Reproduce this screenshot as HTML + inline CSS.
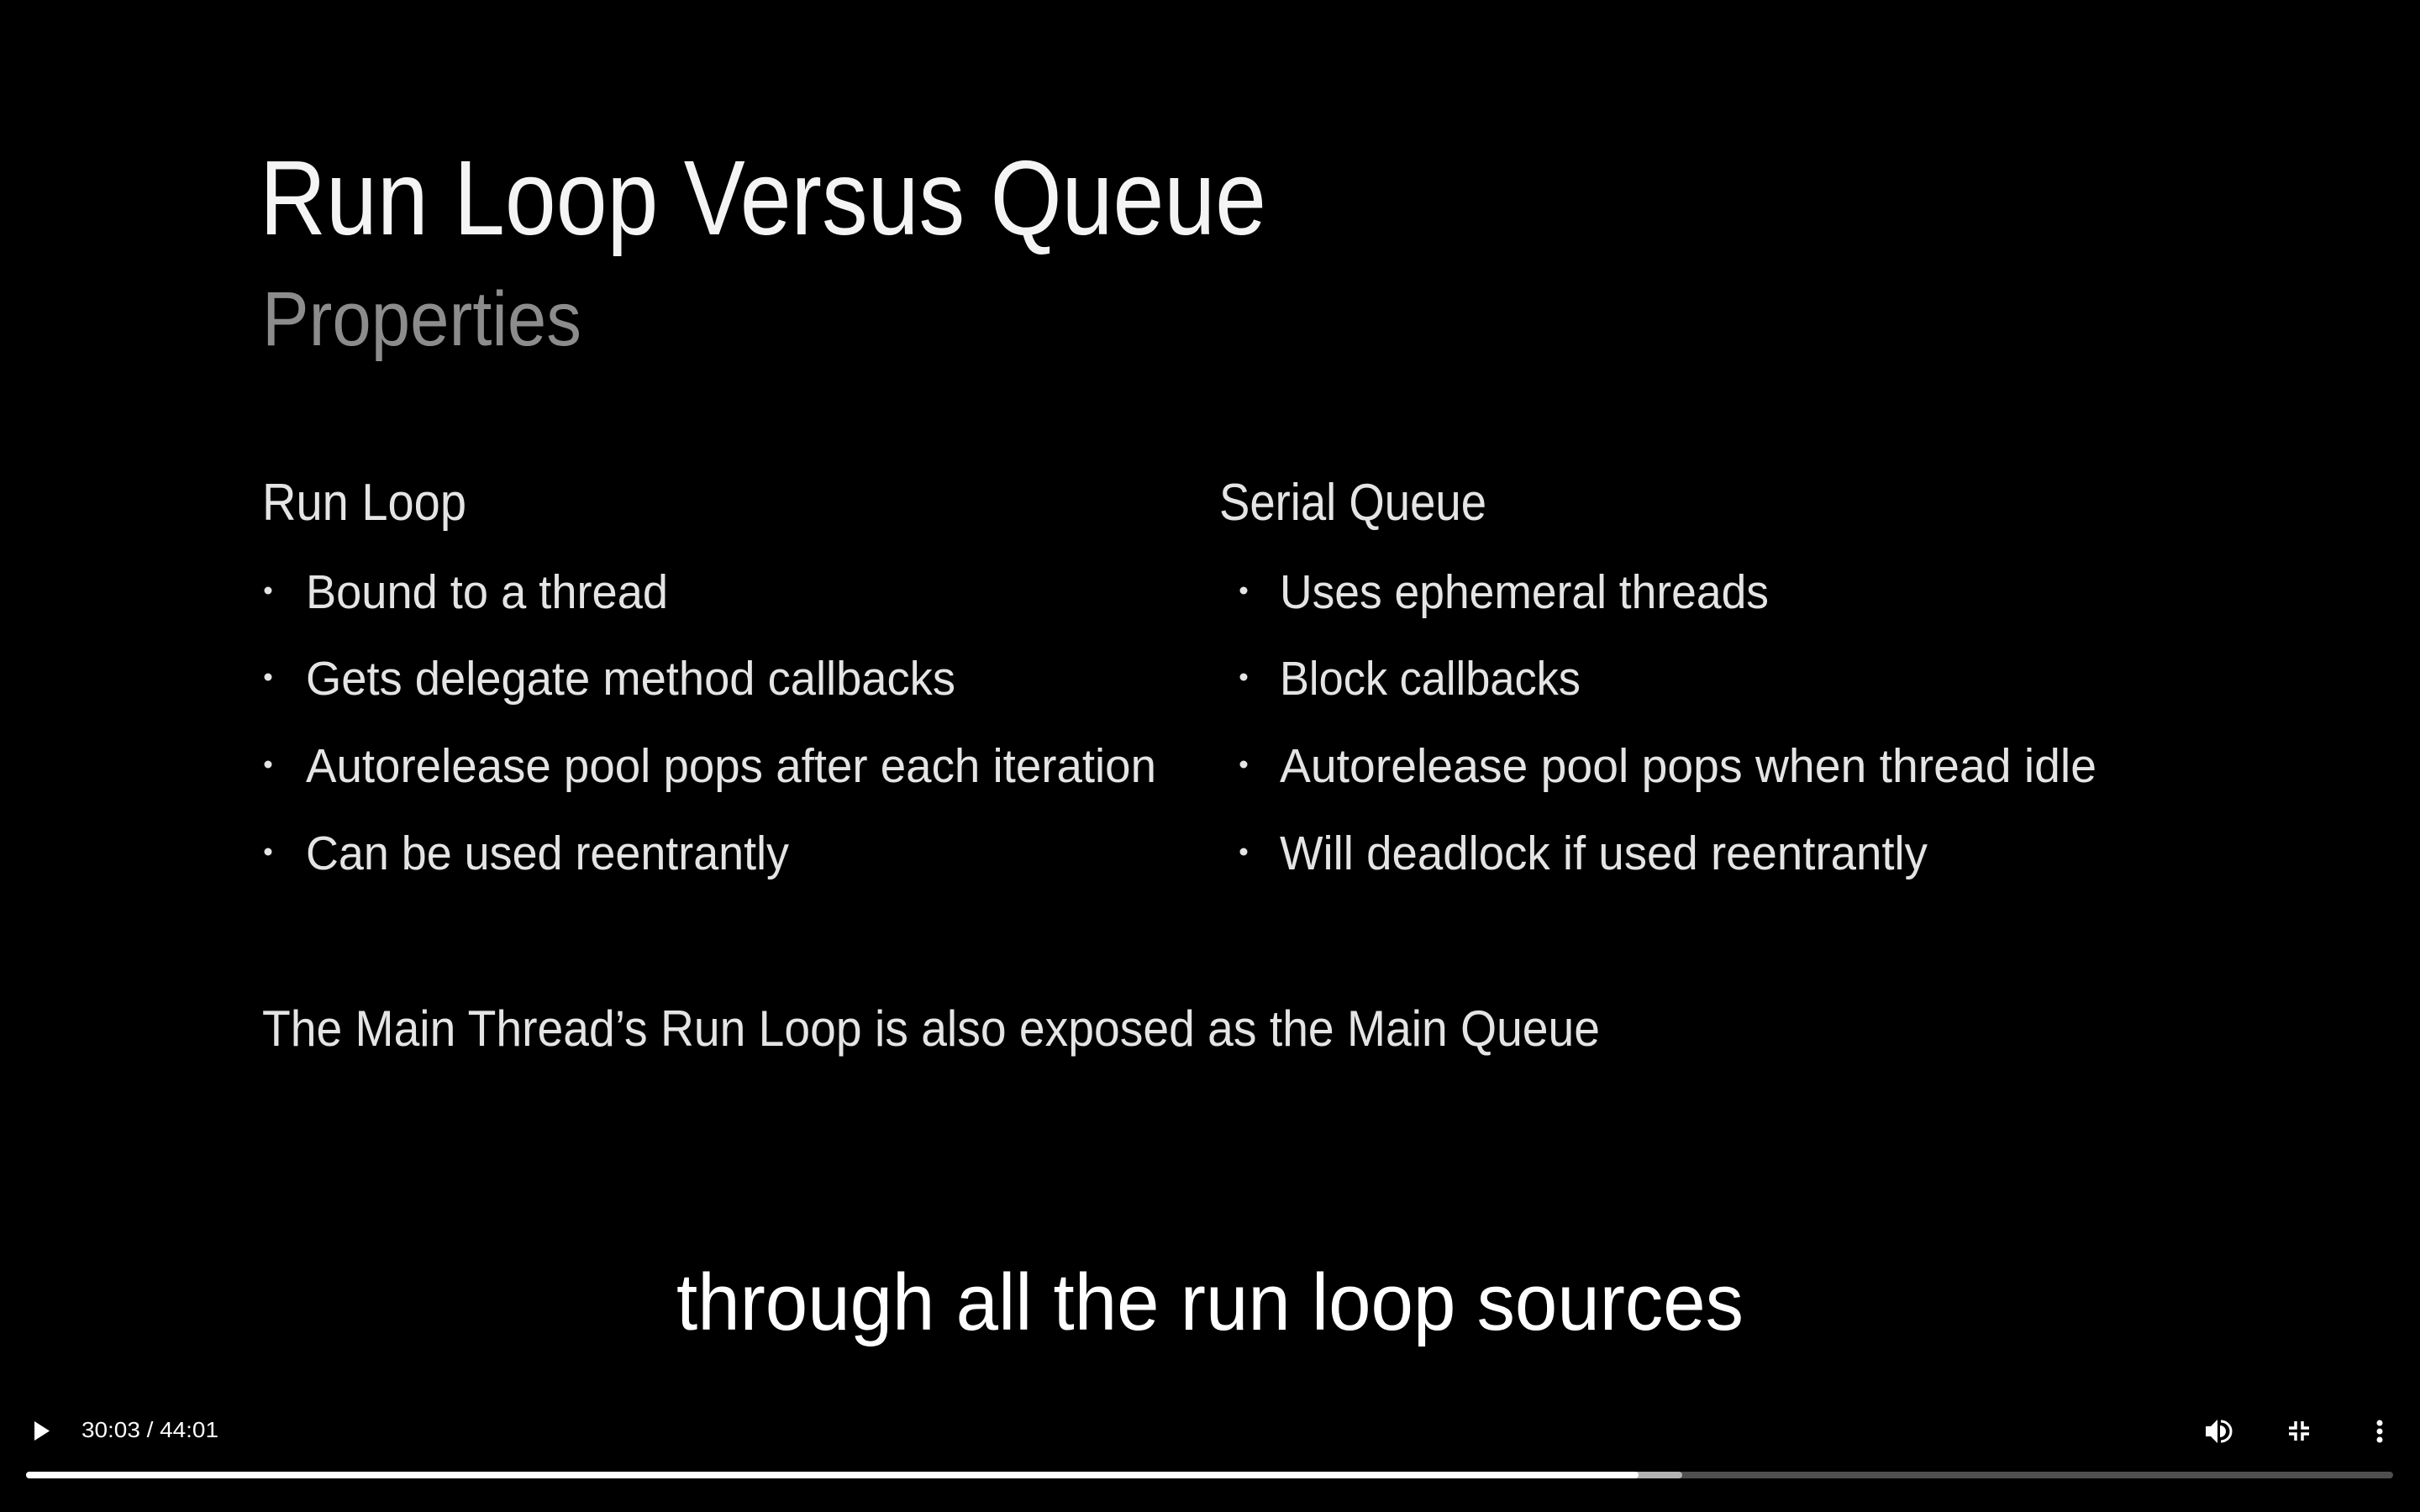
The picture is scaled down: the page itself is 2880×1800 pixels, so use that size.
<!DOCTYPE html>
<html><head><meta charset="utf-8"><style>
html,body{margin:0;padding:0;background:#000;width:2880px;height:1800px;overflow:hidden}
svg{display:block}
text{font-family:"Liberation Sans",sans-serif;fill:#fff}
</style></head><body>
<svg width="2880" height="1800" viewBox="0 0 2880 1800" xmlns="http://www.w3.org/2000/svg">
<rect width="2880" height="1800" fill="#000"/>
<text x="309" y="279" font-size="126" textLength="1198" lengthAdjust="spacingAndGlyphs" style="fill:#f4f4f4">Run Loop Versus Queue</text>
<text x="312" y="411" font-size="92" style="fill:#8c8c8c" textLength="380" lengthAdjust="spacingAndGlyphs">Properties</text>
<text x="312" y="619" font-size="62" textLength="243" lengthAdjust="spacingAndGlyphs" style="fill:#e4e4e4">Run Loop</text>
<text x="1451" y="619" font-size="62" textLength="318" lengthAdjust="spacingAndGlyphs" style="fill:#e4e4e4">Serial Queue</text>
<g>
<circle cx="319" cy="703" r="4.5" fill="#e4e4e4"/>
<circle cx="319" cy="806" r="4.5" fill="#e4e4e4"/>
<circle cx="319" cy="910" r="4.5" fill="#e4e4e4"/>
<circle cx="319" cy="1014" r="4.5" fill="#e4e4e4"/>
<circle cx="1480" cy="703" r="4.5" fill="#e4e4e4"/>
<circle cx="1480" cy="806" r="4.5" fill="#e4e4e4"/>
<circle cx="1480" cy="910" r="4.5" fill="#e4e4e4"/>
<circle cx="1480" cy="1014" r="4.5" fill="#e4e4e4"/>
</g>
<g font-size="57">
<text x="364" y="724" textLength="431" lengthAdjust="spacingAndGlyphs" style="fill:#e4e4e4">Bound to a thread</text>
<text x="364" y="827" textLength="773" lengthAdjust="spacingAndGlyphs" style="fill:#e4e4e4">Gets delegate method callbacks</text>
<text x="364" y="931" textLength="1012" lengthAdjust="spacingAndGlyphs" style="fill:#e4e4e4">Autorelease pool pops after each iteration</text>
<text x="364" y="1035" textLength="575" lengthAdjust="spacingAndGlyphs" style="fill:#e4e4e4">Can be used reentrantly</text>
<text x="1523" y="724" textLength="582" lengthAdjust="spacingAndGlyphs" style="fill:#e4e4e4">Uses ephemeral threads</text>
<text x="1523" y="827" textLength="358" lengthAdjust="spacingAndGlyphs" style="fill:#e4e4e4">Block callbacks</text>
<text x="1523" y="931" textLength="972" lengthAdjust="spacingAndGlyphs" style="fill:#e4e4e4">Autorelease pool pops when thread idle</text>
<text x="1523" y="1035" textLength="771" lengthAdjust="spacingAndGlyphs" style="fill:#e4e4e4">Will deadlock if used reentrantly</text>
</g>
<text x="312" y="1245" font-size="60" textLength="1592" lengthAdjust="spacingAndGlyphs" style="fill:#e4e4e4">The Main Thread’s Run Loop is also exposed as the Main Queue</text>
<text x="805" y="1583" font-size="96" textLength="1270" lengthAdjust="spacingAndGlyphs">through all the run loop sources</text>
<!-- controls -->
<path d="M41 1692 L59 1703.5 L41 1715 Z" fill="#fff"/>
<text x="97" y="1711" font-size="26" textLength="163" lengthAdjust="spacingAndGlyphs">30:03 / 44:01</text>
<path d="M2625 1698 h6 l8 -8 v28 l-8 -8 h-6 Z" fill="#fff"/>
<path d="M2642 1697 a7 7 0 0 1 0 14 Z" fill="#fff"/>
<path d="M2643 1692 a12 12 0 0 1 0 24" fill="none" stroke="#fff" stroke-width="3"/>
<path d="M2724 1700 h8 v-8 M2748 1700 h-8 v-8 M2724 1707 h8 v8 M2748 1707 h-8 v8" fill="none" stroke="#fff" stroke-width="3.5"/>
<circle cx="2832" cy="1694" r="3.5" fill="#fff"/>
<circle cx="2832" cy="1704" r="3.5" fill="#fff"/>
<circle cx="2832" cy="1714" r="3.5" fill="#fff"/>
<rect x="31" y="1752" width="2817" height="8" rx="4" fill="#4f4f4f"/>
<rect x="31" y="1752" width="1971" height="8" rx="4" fill="#b3b3b3"/>
<rect x="31" y="1752" width="1919" height="8" rx="4" fill="#fff"/>
</svg>
</body></html>
